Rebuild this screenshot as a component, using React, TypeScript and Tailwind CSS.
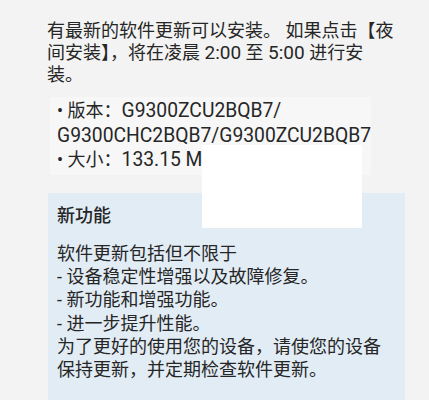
import React from 'react';

const font = { fontFamily: 'Roboto, "Noto Sans CJK SC", sans-serif' };

const Line: React.FC<{ children: React.ReactNode; className?: string }> = ({ children, className = '' }) => (
    <div className={`whitespace-nowrap ${className}`}>{children}</div>
);

export default function App() {
    return (
        <div
            className="relative w-[429px] h-[400px] overflow-hidden bg-[#f3f3f3] text-[#262626]"
            style={font}
        >
            {/* intro text */}
            <div className="pl-[47px] pt-[20px] text-[18px] leading-[22px]">
                <Line>有最新的软件更新可以安装。 如果点击【夜</Line>
                <Line>间安装】，将在凌晨 <span className="text-[19px]">2:00</span> 至 <span className="text-[19px]">5:00</span> 进行安</Line>
                <Line>装。</Line>
            </div>

            {/* version info */}
            <div className="mt-[11px] ml-[50px] mr-[58px] pl-[7px] py-[2px] bg-[#f7f7f7] text-[18px] leading-[24.5px]">
                <Line>• 版本：<span className="text-[19.3px]">G9300ZCU2BQB7/</span></Line>
                <Line className="text-[19.3px]">G9300CHC2BQB7/G9300ZCU2BQB7</Line>
                <Line>• 大小：<span className="text-[19.3px]">133.15 MB</span></Line>
            </div>

            {/* new features panel */}
            <div className="mt-[18.5px] ml-[48px] w-[357px] h-[220px] bg-[#e2ecf5] pl-[9px] pt-[12px]">
                <div className="text-[18px] leading-[22px] font-medium">新功能</div>
                <div className="mt-[15px] text-[18px] leading-[23.2px]">
                    <Line>软件更新包括但不限于</Line>
                    <Line>- 设备稳定性增强以及故障修复。</Line>
                    <Line>- 新功能和增强功能。</Line>
                    <Line>- 进一步提升性能。</Line>
                    <Line>为了更好的使用您的设备，请使您的设备</Line>
                    <Line>保持更新，并定期检查软件更新。</Line>
                </div>
            </div>

            {/* redaction patch over the size value */}
            <div className="absolute left-[202px] top-[145px] w-[160px] h-[83px] bg-white" />
        </div>
    );
}
